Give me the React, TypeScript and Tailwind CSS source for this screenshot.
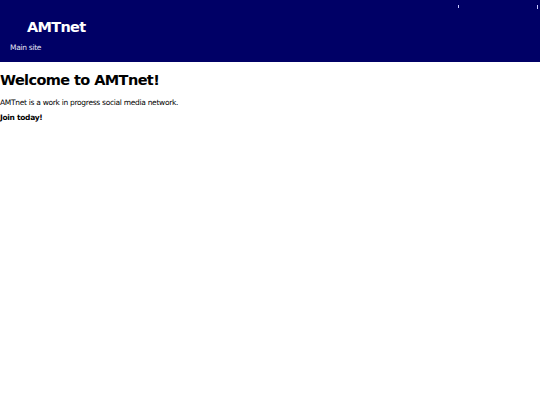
export default function App() {
  return (
    <div className="min-h-screen bg-white font-['DejaVu_Sans',sans-serif] text-black">
      <header className="relative h-[62px] bg-[#000066] text-white">
        <span className="absolute left-[458px] top-[5px] h-[3px] w-px bg-[#c8c8ff]" />
        <span className="absolute left-[537px] top-[5px] h-[4px] w-px bg-[#c8c8ff]" />
        <div className="pl-[27px] pt-[17px] text-[14.5px] font-bold leading-[20px] tracking-[-0.7px]">AMTnet</div>
        <nav className="pl-[10px] pt-[5px] text-[7.5px] leading-[12px] tracking-[-0.3px] text-[#e4e4f4]">Main site</nav>
      </header>
      <main>
        <h1 className="pt-[8px] text-[14.5px] font-bold leading-[20px] tracking-[-0.6px]">Welcome to AMTnet!</h1>
        <p className="pt-[7px] text-[7.5px] leading-[12px] tracking-[-0.3px]">AMTnet is a work in progress social media network.</p>
        <p className="pt-[3px] text-[7.5px] font-bold leading-[12px] tracking-[-0.3px]">Join today!</p>
      </main>
    </div>
  );
}
